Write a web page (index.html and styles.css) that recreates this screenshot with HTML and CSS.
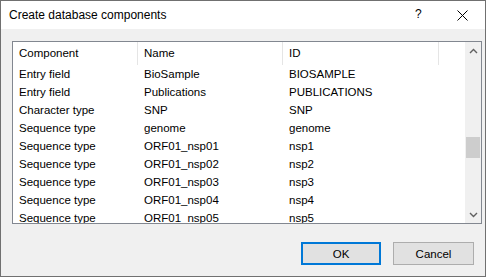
FILE: index.html
```html
<!DOCTYPE html>
<html lang="en">
<head>
  <meta charset="UTF-8">
  <title>Create database components</title>
  <link rel="stylesheet" href="styles.css">
</head>
<body>
  <div class="dialog">
    <!-- Barra de titulo -->
    <div class="title-bar">
      <span class="title">Create database components</span>
      <span class="help">?</span>
      <span class="close">
        <svg width="11" height="11" viewBox="0 0 11 11"><path d="M0.5 0.5 L10.5 10.5 M10.5 0.5 L0.5 10.5" stroke="#000" stroke-width="1" fill="none"/></svg>
      </span>
    </div>

    <div class="dialog-body">
      <!-- Lista de componentes -->
      <div class="list">
        <div class="list-main">
          <div class="list-header">
            <div class="col c1">Component</div>
            <div class="col c2">Name</div>
            <div class="col c3">ID</div>
            <div class="col c4"></div>
          </div>
          <div class="list-rows">
            <div class="row"><div class="c1">Entry field</div><div class="c2">BioSample</div><div class="c3">BIOSAMPLE</div></div>
            <div class="row"><div class="c1">Entry field</div><div class="c2">Publications</div><div class="c3">PUBLICATIONS</div></div>
            <div class="row"><div class="c1">Character type</div><div class="c2">SNP</div><div class="c3">SNP</div></div>
            <div class="row"><div class="c1">Sequence type</div><div class="c2">genome</div><div class="c3">genome</div></div>
            <div class="row"><div class="c1">Sequence type</div><div class="c2">ORF01_nsp01</div><div class="c3">nsp1</div></div>
            <div class="row"><div class="c1">Sequence type</div><div class="c2">ORF01_nsp02</div><div class="c3">nsp2</div></div>
            <div class="row"><div class="c1">Sequence type</div><div class="c2">ORF01_nsp03</div><div class="c3">nsp3</div></div>
            <div class="row"><div class="c1">Sequence type</div><div class="c2">ORF01_nsp04</div><div class="c3">nsp4</div></div>
            <div class="row"><div class="c1">Sequence type</div><div class="c2">ORF01_nsp05</div><div class="c3">nsp5</div></div>
          </div>
        </div>
        <div class="scrollbar">
          <div class="arrow">
            <svg width="9" height="6" viewBox="0 0 9 6"><path d="M1 5 L4.5 1.5 L8 5" stroke="#606060" stroke-width="1.4" fill="none"/></svg>
          </div>
          <div class="track">
            <div class="thumb"></div>
          </div>
          <div class="arrow">
            <svg width="9" height="6" viewBox="0 0 9 6"><path d="M1 1 L4.5 4.5 L8 1" stroke="#606060" stroke-width="1.4" fill="none"/></svg>
          </div>
        </div>
      </div>

      <!-- Botoes -->
      <div class="buttons">
        <button class="btn btn-default">OK</button>
        <button class="btn btn-cancel">Cancel</button>
      </div>
    </div>
  </div>
</body>
</html>
```

FILE: styles.css
```css
body {
  margin: 0;
  font-family: "Liberation Sans", Arial, sans-serif;
  font-size: 11.5px;
  color: #000;
  background: #f0f0f0;
}
.dialog {
  width: 486px;
  height: 277px;
  box-sizing: border-box;
  border: 1px solid #707070;
  display: flex;
  flex-direction: column;
  background: #f0f0f0;
}
/* Barra de titulo */
.title-bar {
  height: 28px;
  background: #fff;
  display: flex;
  align-items: center;
  flex-shrink: 0;
}
.title {
  padding-left: 8px;
  font-size: 12px;
  flex: 1;
}
.help {
  font-size: 12px;
  width: 12px;
  margin-right: 30px;
  margin-top: -2px;
}
.close {
  width: 11px;
  height: 11px;
  margin-right: 17px;
  display: flex;
}
/* Corpo */
.dialog-body {
  flex: 1;
  display: flex;
  flex-direction: column;
  padding: 12px 3px 0 11px;
}
.list {
  height: 183px;
  box-sizing: border-box;
  border: 1px solid #828790;
  background: #fff;
  display: flex;
}
.list-main {
  flex: 1;
  overflow: hidden;
  display: flex;
  flex-direction: column;
}
.list-header {
  height: 23px;
  display: flex;
  flex-shrink: 0;
}
.list-header .col {
  line-height: 22px;
  border-right: 1px solid #e5e5e5;
}
.list-header .c4 {
  flex: 1;
  border-right: none;
}
.list-rows {
  flex: 1;
  overflow: hidden;
}
.row {
  display: flex;
  height: 18px;
  line-height: 18px;
}
.c1, .c2, .c3 {
  box-sizing: border-box;
  padding-left: 6px;
  white-space: nowrap;
}
.c1 { width: 125px; }
.c2 { width: 145px; }
.c3 { width: 156px; }
/* Barra de rolagem */
.scrollbar {
  width: 16px;
  background: #f0f0f0;
  display: flex;
  flex-direction: column;
}
.arrow {
  height: 17px;
  display: flex;
  align-items: center;
  justify-content: center;
}
.track {
  flex: 1;
  padding-top: 78px;
}
.thumb {
  width: 14px;
  margin-left: 1px;
  height: 21px;
  background: #cdcdcd;
}
/* Botoes */
.buttons {
  display: flex;
  justify-content: flex-end;
  gap: 12px;
  padding-top: 18px;
  padding-right: 8px;
}
.btn {
  height: 23px;
  font-family: "Liberation Sans", Arial, sans-serif;
  font-size: 11.5px;
  background: #e1e1e1;
  border: 1px solid #adadad;
  padding: 0;
  color: #000;
}
.btn-default {
  width: 80px;
  border: 2px solid #0078d7;
}
.btn-cancel {
  width: 81px;
}
```
